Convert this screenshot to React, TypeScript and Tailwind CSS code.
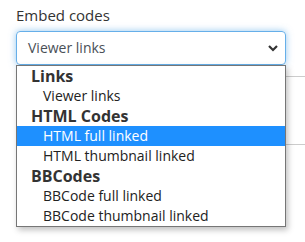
export default function App() {
  const rows: { label: string; group?: boolean; active?: boolean }[] = [
    { label: "Links", group: true },
    { label: "Viewer links" },
    { label: "HTML Codes", group: true },
    { label: "HTML full linked", active: true },
    { label: "HTML thumbnail linked" },
    { label: "BBCodes", group: true },
    { label: "BBCode full linked" },
    { label: "BBCode thumbnail linked" },
  ];

  return (
    <div className="relative w-[305px] h-[242px] bg-white overflow-hidden font-['Open_Sans',sans-serif] text-[15px] text-[#333]">
      <div className="pl-4 pt-[5px]">
        <label className="block leading-5 text-[#333]">Embed codes</label>
        <div className="mt-[6px] w-[270px] h-[34px] rounded-[4px] border border-[#66afe9] shadow-[0_0_7px_rgba(102,175,233,0.7)] flex items-center justify-between pl-[11px] pr-[5px] text-[14px] text-[#495057]">
          <span className="leading-5">Viewer links</span>
          <svg width="14" height="10" viewBox="0 0 14 10" className="text-[#333]">
            <path d="M3 3l4 4 4-4" fill="none" stroke="currentColor" strokeWidth="2.2" />
          </svg>
        </div>

        {/* content hidden under the menu */}
        <div className="mt-[11px] w-[289px] h-[69px] border-t border-b border-[#ccc]" />
      </div>

      <div className="absolute left-4 top-[65px] w-[270px] border border-[#767676] bg-white shadow-[2px_3px_6px_rgba(0,0,0,0.25)]">
        {rows.map((r) => (
          <div
            key={r.label}
            className={
              r.group
                ? "h-5 leading-5 pl-[14px] text-[16px] font-bold text-[#333]"
                : r.active
                ? "h-5 leading-5 pl-[26px] text-[14px] bg-[#1e90ff] text-white"
                : "h-5 leading-5 pl-[26px] text-[14px] text-[#222]"
            }
          >
            {r.label}
          </div>
        ))}
      </div>
    </div>
  );
}
